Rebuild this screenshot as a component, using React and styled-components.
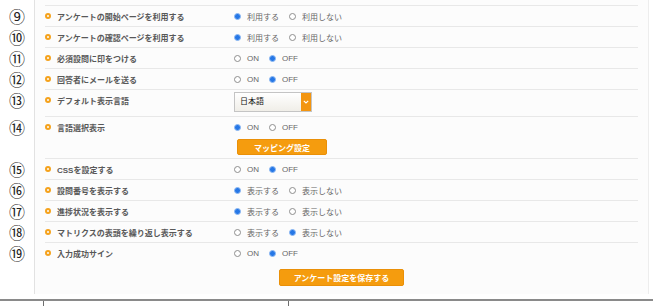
import React from 'react';
import styled, { createGlobalStyle } from 'styled-components';

const GlobalStyle = createGlobalStyle`
    body {
        margin: 0;
        background: #fff;
        font-family: "Liberation Sans", "Noto Sans CJK JP", sans-serif;
    }
`

const Page = styled.div`
    width: 653px;
    display: flex;
    flex-direction: column;
`

const Row = styled.div`
    display: grid;
    grid-template-columns: 34px 615px;
    align-items: stretch;
`

const Num = styled.div`
    height: 20px;
    line-height: 20px;
    text-align: center;
    font-family: "Noto Sans CJK JP", sans-serif;
    font-size: 16px;
    color: #222;
`

const Cell = styled.div`
    border-left: 1px solid #e2e2e2;
    border-right: 1px solid #ededed;
    background: #fcfcfc;
    padding: 0 10px ${( p ) => p.$pad || 0}px;
`

const Inner = styled.div`
    display: grid;
    grid-template-columns: 189px 1fr;
    align-items: start;
    min-height: ${( p ) => p.$h || 0}px;
    border-bottom: ${( p ) => p.$last ? 'none' : '1px solid #e8e8e8'};
`

const Label = styled.div`
    display: flex;
    align-items: center;
    gap: 6px;
    height: 20px;
    font-size: 8px;
    font-weight: bold;
    color: #585858;
`

const Bullet = styled.span`
    width: 6px;
    height: 6px;
    box-sizing: border-box;
    border: 2px solid #f5a21c;
    border-radius: 50%;
`

const Controls = styled.div`
    display: flex;
    flex-direction: column;
    align-items: flex-start;
`

const Options = styled.div`
    display: flex;
    align-items: center;
    height: 20px;
`

const Option = styled.label`
    display: flex;
    align-items: center;
    gap: 6px;
    margin-right: 10px;
    font-size: 8px;
    color: #666;
`

const Radio = styled.span`
    width: 7px;
    height: 7px;
    box-sizing: border-box;
    border-radius: 50%;
    border: 1px solid ${( p ) => p.$on ? '#8fbaf3' : '#8e8e8e'};
    background: ${( p ) => p.$on ? '#2677e6' : '#fff'};
`

const Select = styled.div`
    display: grid;
    grid-template-columns: 1fr 10px;
    width: 78px;
    height: 20px;
    margin: 2px 0 4px;
    box-sizing: border-box;
    border: 1px solid #c4c4c4;
    background: linear-gradient(#ffffff, #f0eee8);
`

const SelectText = styled.span`
    padding-left: 5px;
    line-height: 18px;
    font-size: 8px;
    color: #111;
`

const SelectArrow = styled.span`
    display: flex;
    align-items: center;
    justify-content: center;
    background: #f39510;
`

const Button = styled.button`
    width: ${( p ) => p.$w}px;
    height: ${( p ) => p.$h}px;
    margin: ${( p ) => p.$m || 0};
    padding: 0;
    border: 1px solid #ea9008;
    border-radius: 2px;
    background: #f59c0e;
    color: #fff;
    font-family: inherit;
    font-size: 8px;
    font-weight: bold;
`

const Footer = styled.div`
    display: flex;
    justify-content: center;
    padding: 6px 0 0;
`

const Rule = styled.div`
    margin-top: 5px;
    border-top: 2px solid #8a8a8a;
`

const TableStart = styled.div`
    display: grid;
    grid-template-columns: 43px 245px 1fr;
    height: 5px;
`

const TableCell = styled.div`
    border-left: ${( p ) => p.$first ? 'none' : '1px solid #6e6e6e'};
`

const Chevron = () => (
    <svg width="6" height="4" viewBox="0 0 6 4">
        <path d="M0.8 0.8 L3 3 L5.2 0.8" fill="none" stroke="#fff" strokeWidth="1.1" />
    </svg>
);

const ON_OFF = [ 'ON', 'OFF' ];
const USE = [ '利用する', '利用しない' ];
const SHOW = [ '表示する', '表示しない' ];

const settings = [
    { num: '⑨', label: 'アンケートの開始ページを利用する', options: USE, checked: 0 },
    { num: '⑩', label: 'アンケートの確認ページを利用する', options: USE, checked: 0 },
    { num: '⑪', label: '必須設問に印をつける', options: ON_OFF, checked: 1 },
    { num: '⑫', label: '回答者にメールを送る', options: ON_OFF, checked: 1 },
    { num: '⑬', label: 'デフォルト表示言語', select: '日本語' },
    { num: '⑭', label: '言語選択表示', options: ON_OFF, checked: 0, button: 'マッピング設定' },
    { num: '⑮', label: 'CSSを設定する', options: ON_OFF, checked: 1 },
    { num: '⑯', label: '設問番号を表示する', options: SHOW, checked: 0 },
    { num: '⑰', label: '進捗状況を表示する', options: SHOW, checked: 0 },
    { num: '⑱', label: 'マトリクスの表頭を繰り返し表示する', options: SHOW, checked: 1 },
    { num: '⑲', label: '入力成功サイン', options: ON_OFF, checked: 1 }
];

const SettingRow = ( { setting, last } ) => {
    const { num, label, options, checked, select, button } = setting;
    return (
        <Row>
            <Num>{num}</Num>
            <Cell>
                <Inner $last={last}>
                    <Label><Bullet />{label}</Label>
                    <Controls>
                        {options &&
                            <Options>
                                {options.map( ( text, index ) => (
                                    <Option key={text}>
                                        <Radio $on={index === checked} />
                                        {text}
                                    </Option>
                                ) )}
                            </Options>
                        }
                        {select &&
                            <Select>
                                <SelectText>{select}</SelectText>
                                <SelectArrow><Chevron /></SelectArrow>
                            </Select>
                        }
                        {button &&
                            <Button $w={90} $h={16} $m="2px 0 3px 3px">{button}</Button>
                        }
                    </Controls>
                </Inner>
            </Cell>
        </Row>
    );
};

const App = () => (
    <Page>
        <GlobalStyle />
        <Row>
            <div />
            <Cell><Inner $h={5} /></Cell>
        </Row>
        {settings.map( ( setting, index ) => (
            <SettingRow key={setting.num}
                        setting={setting}
                        last={index === settings.length - 1} />
        ) )}
        <Row>
            <div />
            <Cell $pad={8}>
                <Footer>
                    <Button $w={125} $h={17}>アンケート設定を保存する</Button>
                </Footer>
            </Cell>
        </Row>
        <Rule />
        <TableStart>
            <TableCell $first />
            <TableCell />
            <TableCell />
        </TableStart>
    </Page>
);

export default App;
